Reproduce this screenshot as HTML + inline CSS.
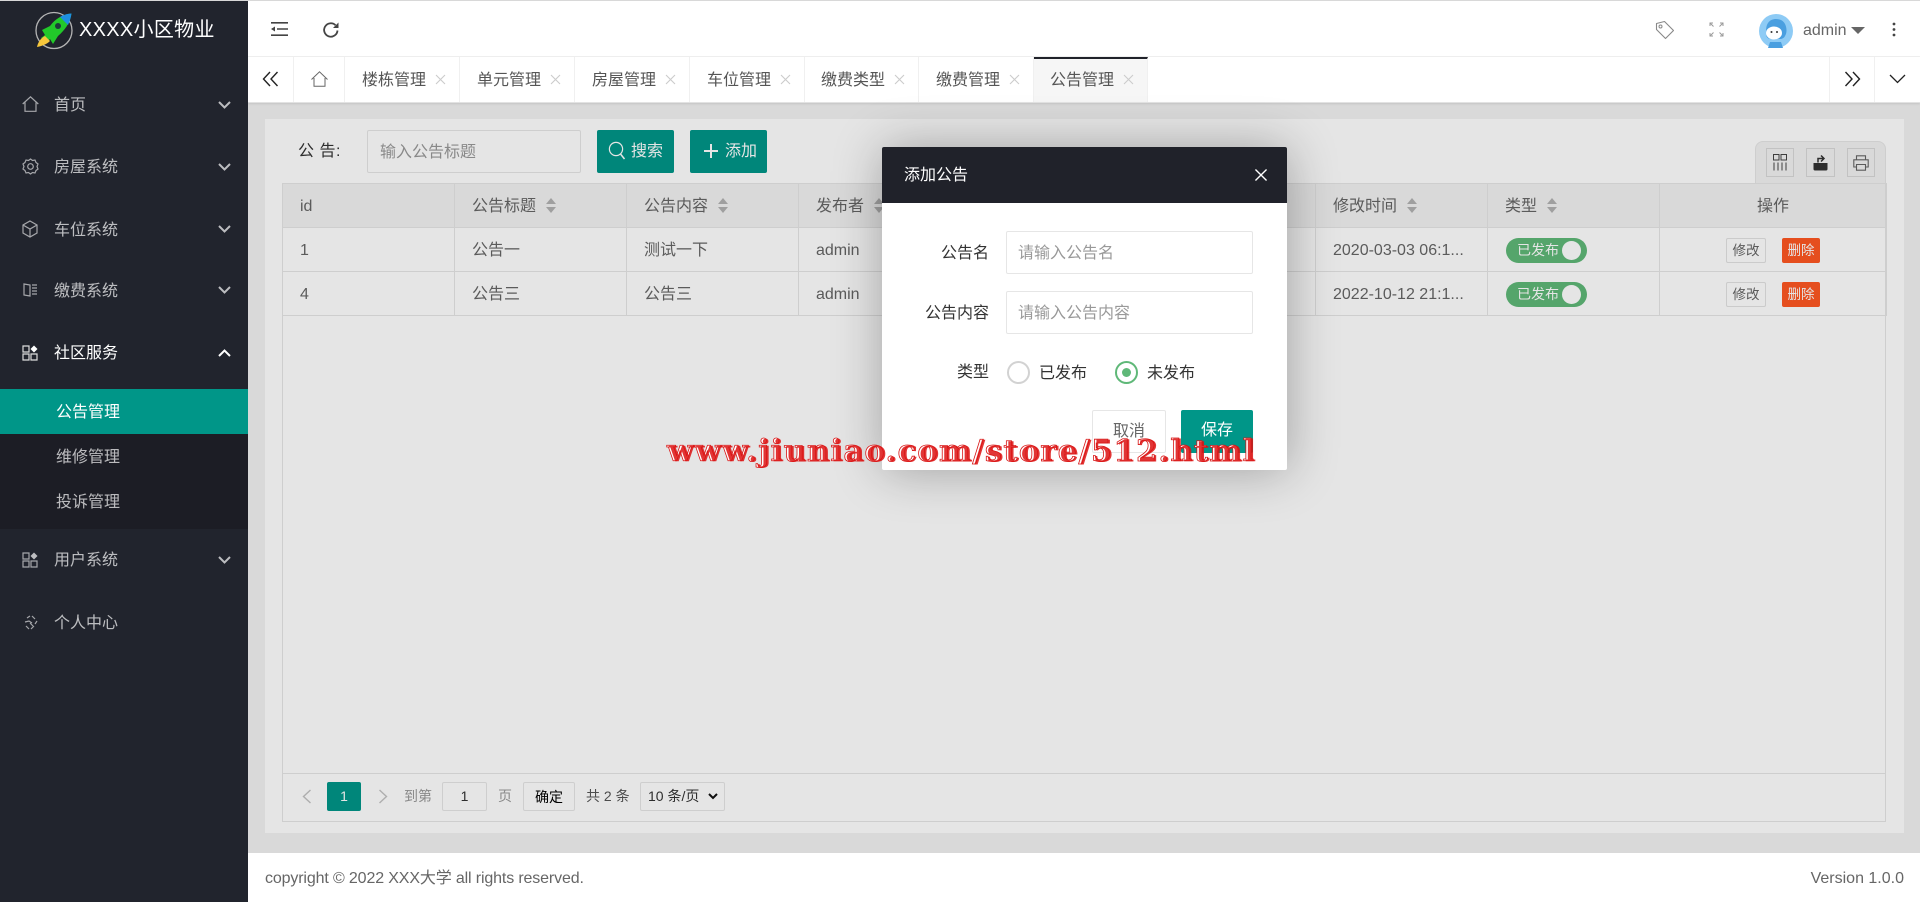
<!DOCTYPE html>
<html lang="zh-CN">
<head>
<meta charset="utf-8">
<title>XXXX小区物业</title>
<style>
*{box-sizing:border-box}
html,body{margin:0;padding:0;width:1920px;height:902px;overflow:hidden;background:#fff;font-family:"Liberation Sans","Noto Sans CJK SC",sans-serif;font-size:16px;color:#666}
.a{position:absolute}
.t{position:absolute;white-space:nowrap;line-height:22px;height:22px}
svg{position:absolute;overflow:visible}
#side{position:absolute;left:0;top:0;width:248px;height:902px;background:#21242d}
.m{position:absolute;left:54px;white-space:nowrap;line-height:22px;color:rgba(255,255,255,.7);font-size:16px}
.sub{position:absolute;left:56px;white-space:nowrap;line-height:22px;color:rgba(255,255,255,.7);font-size:16px}
.ic{fill:none;stroke:rgba(255,255,255,.6);stroke-width:1.2}
.tab{position:absolute;top:57px;height:45px;border-right:1px solid #f0f0f0;width:115px}
.tab span{position:absolute;left:17px;top:13px;font-size:16px;line-height:22px;color:#555;white-space:nowrap}
.tab svg{left:91px;top:18px}
table{position:absolute;left:282px;top:183px;width:1604px;table-layout:fixed;border-collapse:collapse}
td,th{border:1px solid #e6e6e6;padding:2px 0 0 17px;height:44px;font-weight:400;font-size:16px;color:#666;text-align:left;white-space:nowrap;overflow:hidden;vertical-align:middle;line-height:22px}
th{background:#f2f2f2}
.s{display:inline-block;position:relative;width:11px;height:15px;margin-left:10px;vertical-align:-2px}
.s:before{content:"";position:absolute;left:0;top:0;border:5.5px solid transparent;border-top:0;border-bottom:6px solid #b2b2b2}
.s:after{content:"";position:absolute;left:0;bottom:0;border:5.5px solid transparent;border-bottom:0;border-top:6px solid #b2b2b2}
.sw{position:absolute;left:1506px;width:81px;height:25px;border-radius:13px;background:#5FB878;color:#fff;font-size:14px;line-height:25px;padding-left:11px;white-space:nowrap}
.sw i{position:absolute;right:6px;top:3px;width:19px;height:19px;border-radius:50%;background:#fff}
.b1{position:absolute;left:1726px;width:40px;height:25px;border:1px solid #e2e2e2;border-radius:2px;background:#fff;color:#666;font-size:13.500px;line-height:24px;text-align:center}
.b2{position:absolute;left:1782px;width:38px;height:25px;border-radius:2px;background:#FF5722;color:#fff;font-size:13.500px;line-height:25px;text-align:center}
.tb{position:absolute;top:148px;height:29px;border:1px solid #d8d8d8;background:#f2f2f2}
#shade{position:absolute;left:248px;top:103px;width:1672px;height:750px;background:rgba(0,0,0,.1)}
#modal{position:absolute;left:882px;top:147px;width:405px;height:323px;background:#fff;box-shadow:1px 1px 50px rgba(0,0,0,.3);border-radius:2px}
.lb{position:absolute;right:298px;color:#333;font-size:16px;line-height:22px;white-space:nowrap}
.inp{position:absolute;left:124px;width:247px;border:1px solid #e6e6e6;border-radius:2px;background:#fff;color:#999;font-size:16px;line-height:22px;padding:10px 0 0 11px;white-space:nowrap}
#wm text{font-family:"DejaVu Serif","Liberation Serif",serif;font-weight:700;font-size:30px}
</style>
</head>
<body>

<!-- main content -->
<div class="a" style="left:248px;top:103px;width:1672px;height:750px;background:#f2f2f2"></div>
<div class="a" style="left:265px;top:119px;width:1639px;height:714px;background:#fff"></div>

<div class="t" style="left:298px;top:141px;color:#333;letter-spacing:.5px">公 告:</div>
<div class="a" style="left:367px;top:130px;width:214px;height:43px;border:1px solid #e6e6e6;border-radius:2px;background:#fff;color:#999;line-height:22px;padding:11px 0 0 12px;white-space:nowrap">输入公告标题</div>

<div class="a" style="left:597px;top:130px;width:77px;height:43px;background:#009688;border-radius:2px"></div>
<svg style="left:608px;top:141px" width="20" height="20" viewBox="0 0 20 20"><circle cx="8" cy="8" r="6.600" fill="none" stroke="#fff" stroke-width="1.200"/><path d="M12.500 13l4 5" stroke="#fff" stroke-width="1.500" fill="none"/></svg>
<div class="t" style="left:631px;top:141px;color:#fff">搜索</div>
<div class="a" style="left:690px;top:130px;width:77px;height:43px;background:#009688;border-radius:2px"></div>
<svg style="left:703px;top:143px" width="16" height="16" viewBox="0 0 16 16"><path d="M8 1v14M1 8h14" stroke="#fff" stroke-width="2" fill="none"/></svg>
<div class="t" style="left:725px;top:141px;color:#fff">添加</div>

<!-- table toolbar -->
<div class="a" style="left:1755px;top:141px;width:131px;height:42px;background:#f2f2f2;border:1px solid #e6e6e6;border-bottom:0;border-radius:8px 8px 0 0"></div>
<div class="tb" style="left:1766px;width:28px"></div>
<div class="tb" style="left:1806px;width:29px"></div>
<div class="tb" style="left:1847px;width:28px"></div>
<svg style="left:1773px;top:154px" width="14" height="17" viewBox="0 0 14 17"><path d="M0.500 0.500h5.500v5.500H0.500zM8 0.500h5.500v5.500H8z" fill="none" stroke="#444" stroke-width="1"/><path d="M1 8.500V16.500M5 8.500V16.500M9 8.500V16.500M13 8.500V16.500" stroke="#444" stroke-width="1" fill="none"/></svg>
<svg style="left:1813px;top:154px" width="15" height="17" viewBox="0 0 15 17"><path d="M0.500 9h14v6a1.500 1.500 0 0 1-1.500 1.500H2A1.500 1.500 0 0 1 0.500 15z" fill="#333"/><path d="M5 8.500V4.500h5M8 1.500l3 3-3 3" fill="none" stroke="#333" stroke-width="1.500"/></svg>
<svg style="left:1853px;top:155px" width="16" height="16" viewBox="0 0 16 16"><path d="M3.500 4.500V0.800h9v3.700M3.500 12H0.800V4.800h14.400V12H12.500M3.500 9.500h9V15.200H3.500z" fill="none" stroke="#666" stroke-width="1.100"/></svg>

<table>
<colgroup><col style="width:172px"><col style="width:172px"><col style="width:172px"><col style="width:172px"><col style="width:173px"><col style="width:172px"><col style="width:172px"><col style="width:172px"><col style="width:227px"></colgroup>
<tr><th>id</th><th>公告标题<i class="s"></i></th><th>公告内容<i class="s"></i></th><th>发布者<i class="s"></i></th><th></th><th></th><th>修改时间<i class="s"></i></th><th>类型<i class="s"></i></th><th style="text-align:center;padding:2px 0 0">操作</th></tr>
<tr><td>1</td><td>公告一</td><td>测试一下</td><td>admin</td><td></td><td></td><td>2020-03-03 06:1...</td><td></td><td></td></tr>
<tr><td>4</td><td>公告三</td><td>公告三</td><td>admin</td><td></td><td></td><td>2022-10-12 21:1...</td><td></td><td></td></tr>
</table>
<div class="sw" style="top:238px">已发布<i></i></div>
<div class="sw" style="top:282px">已发布<i></i></div>
<div class="b1" style="top:238px">修改</div>
<div class="b2" style="top:238px">删除</div>
<div class="b1" style="top:282px">修改</div>
<div class="b2" style="top:282px">删除</div>

<!-- table frame and pagination -->
<div class="a" style="left:282px;top:183px;width:1604px;height:639px;border:1px solid #e6e6e6"></div>
<div class="a" style="left:282px;top:773px;width:1604px;height:1px;background:#e6e6e6"></div>
<svg style="left:302px;top:789px" width="10" height="15" viewBox="0 0 10 15"><path d="M8.500 1L1.500 7.500 8.500 14" fill="none" stroke="#c2c2c2" stroke-width="1.400"/></svg>
<div class="a" style="left:327px;top:782px;width:34px;height:29px;background:#009688;border-radius:2px;color:#fff;font-size:14px;line-height:29px;text-align:center">1</div>
<svg style="left:378px;top:789px" width="10" height="15" viewBox="0 0 10 15"><path d="M1.500 1L8.500 7.500 1.500 14" fill="none" stroke="#c2c2c2" stroke-width="1.400"/></svg>
<div class="t" style="left:404px;top:785px;font-size:14px;color:#999">到第</div>
<div class="a" style="left:442px;top:782px;width:45px;height:29px;border:1px solid #e6e6e6;border-radius:2px;background:#fff;color:#333;font-size:14px;line-height:27px;text-align:center">1</div>
<div class="t" style="left:498px;top:785px;font-size:14px;color:#999">页</div>
<div class="a" style="left:523px;top:782px;width:52px;height:29px;border:1px solid #e6e6e6;border-radius:2px;background:#fff;color:#000;font-size:14px;line-height:28px;text-align:center">确定</div>
<div class="t" style="left:586px;top:785px;font-size:14px;color:#555">共 2 条</div>
<div class="a" style="left:640px;top:782px;width:85px;height:29px;border:1px solid #e6e6e6;border-radius:2px;background:#fff;color:#333;font-size:14px;line-height:27px;padding-left:7px;white-space:nowrap">10 条/页</div>
<svg style="left:708px;top:793px" width="10" height="7" viewBox="0 0 10 7"><path d="M1 1l4 4 4-4" fill="none" stroke="#111" stroke-width="2"/></svg>

<div id="shade"></div>

<!-- header -->
<div class="a" style="left:248px;top:0;width:1672px;height:57px;background:#fff;border-bottom:1px solid #f0f0f0"></div>
<svg style="left:271px;top:22px" width="17" height="14" viewBox="0 0 17 14"><path d="M0 0.800h17M6 7h11M0 13.200h17" stroke="#444" stroke-width="1.600" fill="none"/><path d="M0 7l4-2.500v5z" fill="#444"/></svg>
<svg style="left:322px;top:21px" width="18" height="18" viewBox="0 0 18 18"><path d="M15.500 9.500a6.700 6.700 0 1 1-2-5.300" fill="none" stroke="#444" stroke-width="1.800"/><path d="M16.500 1.500v5.500h-5.500z" fill="#444"/></svg>

<svg style="left:1655px;top:20px" width="20" height="20" viewBox="0 0 20 20"><path d="M1.500 3.500l0 6 9 9 8-8-9-9z" fill="none" stroke="#888" stroke-width="1.100" stroke-linejoin="round"/><circle cx="5.500" cy="6.500" r="1.500" fill="none" stroke="#888" stroke-width="1"/></svg>
<svg style="left:1709px;top:22px" width="15" height="15" viewBox="0 0 15 15"><path d="M1 4V1h3M11 1h3v3M1 11v3h3M11 14h3v-3M1 1l3.500 3.500M14 1l-3.500 3.500M1 14l3.500-3.500M14 14l-3.500-3.500" fill="none" stroke="#999" stroke-width="1"/></svg>
<svg style="left:1759px;top:14px" width="34" height="34" viewBox="0 0 34 34"><circle cx="17" cy="17" r="17" fill="#8ecbf5"/><path d="M9 9c2-3 5-4 8-4s7 1 9 5c2 4 2 9 0 12-1 2-3 3-5 3h-9c-3 0-5-2-5-5 0-4 0-8 2-11z" fill="#4a9fe0"/><ellipse cx="15" cy="19" rx="8" ry="6.500" fill="#fff"/><path d="M11 28h11l2 6H9z" fill="#4a9fe0"/><circle cx="12.500" cy="18" r="1" fill="#333"/><circle cx="18" cy="18" r="1" fill="#333"/></svg>
<div class="t" style="left:1803px;top:20px;color:#666">admin</div>
<svg style="left:1851px;top:27px" width="14" height="7" viewBox="0 0 14 7"><path d="M0 0h14L7 7z" fill="#666"/></svg>
<svg style="left:1892px;top:22px" width="4" height="15" viewBox="0 0 4 15"><circle cx="2" cy="2" r="1.400" fill="#444"/><circle cx="2" cy="7.500" r="1.400" fill="#444"/><circle cx="2" cy="13" r="1.400" fill="#444"/></svg>

<!-- tabs -->
<div class="a" style="left:248px;top:57px;width:1672px;height:46px;background:#fff;border-bottom:1px solid #e2e2e2;box-shadow:0 1px 2px rgba(0,0,0,.1)"></div>
<svg style="left:262px;top:71px" width="17" height="16" viewBox="0 0 17 16"><path d="M8 1L1.500 8 8 15M15.500 1L9 8l6.500 7" fill="none" stroke="#222" stroke-width="1.400"/></svg>
<div class="a" style="left:293px;top:57px;width:1px;height:45px;background:#f0f0f0"></div>
<svg style="left:311px;top:71px" width="17" height="16" viewBox="0 0 17 16"><path d="M0.500 8.500L8.500 0.800l8 7.700M3 7V15.300h11V7" fill="none" stroke="#666" stroke-width="1"/></svg>
<div class="a" style="left:344px;top:57px;width:1px;height:45px;background:#f0f0f0"></div>
<div class="tab" style="left:345px"><span>楼栋管理</span><svg width="9" height="9" viewBox="0 0 10 10"><path d="M0 0l10 10M10 0L0 10" stroke="#ccc" stroke-width="1.200"/></svg></div>
<div class="tab" style="left:460px"><span>单元管理</span><svg width="9" height="9" viewBox="0 0 10 10"><path d="M0 0l10 10M10 0L0 10" stroke="#ccc" stroke-width="1.200"/></svg></div>
<div class="tab" style="left:575px"><span>房屋管理</span><svg width="9" height="9" viewBox="0 0 10 10"><path d="M0 0l10 10M10 0L0 10" stroke="#ccc" stroke-width="1.200"/></svg></div>
<div class="tab" style="left:690px"><span>车位管理</span><svg width="9" height="9" viewBox="0 0 10 10"><path d="M0 0l10 10M10 0L0 10" stroke="#ccc" stroke-width="1.200"/></svg></div>
<div class="tab" style="left:804px"><span>缴费类型</span><svg width="9" height="9" viewBox="0 0 10 10"><path d="M0 0l10 10M10 0L0 10" stroke="#ccc" stroke-width="1.200"/></svg></div>
<div class="tab" style="left:919px"><span>缴费管理</span><svg width="9" height="9" viewBox="0 0 10 10"><path d="M0 0l10 10M10 0L0 10" stroke="#ccc" stroke-width="1.200"/></svg></div>
<div class="tab" style="left:1034px;background:#f6f6f6;border-top:2px solid #20222a;width:114px"><span style="top:11px;left:16px">公告管理</span><svg style="top:16px;left:90px" width="9" height="9" viewBox="0 0 10 10"><path d="M0 0l10 10M10 0L0 10" stroke="#ccc" stroke-width="1.200"/></svg></div>
<div class="a" style="left:1829px;top:57px;width:1px;height:45px;background:#f0f0f0"></div>
<div class="a" style="left:1874px;top:57px;width:1px;height:45px;background:#f0f0f0"></div>
<svg style="left:1844px;top:71px" width="17" height="16" viewBox="0 0 17 16"><path d="M1.500 1L8 8l-6.500 7M9 1l6.500 7L9 15" fill="none" stroke="#222" stroke-width="1.400"/></svg>
<svg style="left:1889px;top:74px" width="17" height="10" viewBox="0 0 17 10"><path d="M1 1l7.500 7.500L16 1" fill="none" stroke="#222" stroke-width="1.300"/></svg>

<!-- footer -->
<div class="a" style="left:248px;top:853px;width:1672px;height:49px;background:#fff"></div>
<div class="t" style="left:265px;top:868px;color:#666;letter-spacing:-.14px">copyright © 2022 XXX大学 all rights reserved.</div>
<div class="t" style="right:16px;top:868px;color:#666">Version 1.0.0</div>

<!-- sidebar -->
<div id="side">
<svg style="left:0;top:0" width="120" height="60" viewBox="0 0 120 60">
<circle cx="54" cy="30.500" r="18" fill="none" stroke="#b5b5b5" stroke-width="1.300"/>
<path d="M71.500 13.500C63 14 55 19 50 26L42 30L45 35L41 38L46 43L50 39L53 44L58 36C65 30 70 23 71.500 13.500Z" fill="#22c92a"/>
<path d="M71.500 13.500C67 13.700 63 15 60 17L68 25C70 21 71 17 71.500 13.500Z" fill="#1e8fe0"/>
<circle cx="58" cy="26" r="3" fill="#1d3a3a"/>
<path d="M37 47C38 42 41 38 45 36L50 41C47 44 42 46 37 47Z" fill="#f7c73b"/>
</svg>
<div class="t" style="left:79px;top:19px;font-size:20px;color:#fff;line-height:22px;letter-spacing:.3px">XXXX小区物业</div>

<!-- icons -->
<svg class="ic" style="left:22px;top:96px" width="17" height="16" viewBox="0 0 17 16"><path d="M0.700 8L8.500 0.800 16.300 8M3 6.500V15.300h11V6.500"/></svg>
<svg class="ic" style="left:22px;top:158px" width="17" height="17" viewBox="0 0 17 17"><path d="M8.500 1l2 1.500 2.500-.5 1 2.500 2 1.500-1 2.500 1 2.500-2 1.500-1 2.500-2.500-.5-2 1.500-2-1.500-2.500.5-1-2.500-2-1.500 1-2.500-1-2.500 2-1.500 1-2.500 2.500.5z"/><circle cx="8.500" cy="8.500" r="2.800"/></svg>
<svg class="ic" style="left:22px;top:220px" width="16" height="18" viewBox="0 0 16 18"><path d="M8 1l7 4v8l-7 4-7-4V5zM1 5l7 4 7-4M8 9v8"/></svg>
<svg class="ic" style="left:23px;top:283px" width="15" height="14" viewBox="0 0 15 14"><path d="M1 1l6 1v11l-6-1zM9 2h5M9 5h5M9 8h5M9 11h5"/></svg>
<svg style="left:22px;top:345px" width="16" height="16" viewBox="0 0 16 16"><path d="M1 1h6v6H1zM1 9h6v6H1zM9 9h6v6H9z" fill="none" stroke="#ddd" stroke-width="1.200"/><path d="M12 0.500l3.500 3.500-3.500 3.500L8.500 4z" fill="#fff"/></svg>
<svg style="left:22px;top:552px" width="16" height="16" viewBox="0 0 16 16"><path d="M1 1h6v6H1zM1 9h6v6H1zM9 9h6v6H9z" fill="none" stroke="rgba(255,255,255,.6)" stroke-width="1.200"/><path d="M12 0.500l3.500 3.500-3.500 3.500L8.500 4z" fill="rgba(255,255,255,.7)"/></svg>
<svg class="ic" style="left:24px;top:615px" width="14" height="15" viewBox="0 0 14 15"><path d="M3 3l3-2M8 1l3 3M13 6l-2 3M10 11l-3 3M5 14L2 11M1 7l4-1 3 2M6 8l3 3"/></svg>

<div class="m" style="top:95px">首页</div>
<div class="m" style="top:157px">房屋系统</div>
<div class="m" style="top:220px">车位系统</div>
<div class="m" style="top:281px">缴费系统</div>
<div class="m" style="top:343px;color:#fff">社区服务</div>

<div class="a" style="left:0;top:389px;width:248px;height:140px;background:#1c1d25"></div>
<div class="a" style="left:0;top:389px;width:248px;height:45px;background:#009688"></div>
<div class="sub" style="top:402px;color:#fff">公告管理</div>
<div class="sub" style="top:447px">维修管理</div>
<div class="sub" style="top:492px">投诉管理</div>

<div class="m" style="top:550px">用户系统</div>
<div class="m" style="top:613px">个人中心</div>

<svg style="left:218px;top:101px" width="13" height="8" viewBox="0 0 13 8"><path d="M1 1l5.500 5.500L12 1" fill="none" stroke="rgba(255,255,255,.7)" stroke-width="2"/></svg>
<svg style="left:218px;top:163px" width="13" height="8" viewBox="0 0 13 8"><path d="M1 1l5.500 5.500L12 1" fill="none" stroke="rgba(255,255,255,.7)" stroke-width="2"/></svg>
<svg style="left:218px;top:225px" width="13" height="8" viewBox="0 0 13 8"><path d="M1 1l5.500 5.500L12 1" fill="none" stroke="rgba(255,255,255,.7)" stroke-width="2"/></svg>
<svg style="left:218px;top:286px" width="13" height="8" viewBox="0 0 13 8"><path d="M1 1l5.500 5.500L12 1" fill="none" stroke="rgba(255,255,255,.7)" stroke-width="2"/></svg>
<svg style="left:218px;top:349px" width="13" height="8" viewBox="0 0 13 8"><path d="M1 7l5.500-5.500L12 7" fill="none" stroke="#fff" stroke-width="2"/></svg>
<svg style="left:218px;top:556px" width="13" height="8" viewBox="0 0 13 8"><path d="M1 1l5.500 5.500L12 1" fill="none" stroke="rgba(255,255,255,.7)" stroke-width="2"/></svg>
</div>

<div class="a" style="left:0;top:0;width:1920px;height:1px;background:#d8d8d8"></div>

<!-- modal -->
<div id="modal">
  <div class="a" style="left:0;top:0;width:405px;height:56px;background:#20222a;border-radius:2px 2px 0 0"></div>
  <div class="t" style="left:22px;top:18px;color:#fff">添加公告</div>
  <svg style="left:373px;top:22px" width="12" height="12" viewBox="0 0 13 13"><path d="M0.500 0.500l12 12M12.500 0.500l-12 12" stroke="#fff" stroke-width="1.500"/></svg>

  <div class="lb" style="top:96px">公告名</div>
  <div class="inp" style="top:84px;height:43px;padding-top:11px">请输入公告名</div>
  <div class="lb" style="top:156px">公告内容</div>
  <div class="inp" style="top:144px;height:43px;padding-top:11px">请输入公告内容</div>
  <div class="lb" style="top:215px">类型</div>

  <div class="a" style="left:125px;top:214px;width:23px;height:23px;border:2px solid #d2d2d2;border-radius:50%"></div>
  <div class="t" style="left:157px;top:216px;color:#333">已发布</div>
  <div class="a" style="left:233px;top:214px;width:23px;height:23px;border:2px solid #5FB878;border-radius:50%"></div>
  <div class="a" style="left:240px;top:221px;width:9px;height:9px;background:#5FB878;border-radius:50%"></div>
  <div class="t" style="left:265px;top:216px;color:#333">未发布</div>

  <div class="a" style="left:210px;top:263px;width:74px;height:43px;border:1px solid #e6e6e6;border-radius:2px;background:#fff;color:#666;line-height:42px;text-align:center">取消</div>
  <div class="a" style="left:299px;top:263px;width:72px;height:43px;background:#009688;border-radius:2px;color:#fff;line-height:42px;text-align:center">保存</div>
</div>

<svg id="wm" style="left:0;top:0" width="1920" height="902">
  <text x="667" y="461" textLength="587" lengthAdjust="spacing" fill="#fff" stroke="#d81414" stroke-width=".8">www.jiuniao.com/store/512.html</text>
  <text x="669" y="461.500" textLength="587" lengthAdjust="spacing" fill="#dc1212" opacity=".85">www.jiuniao.com/store/512.html</text>
</svg>

</body>
</html>
